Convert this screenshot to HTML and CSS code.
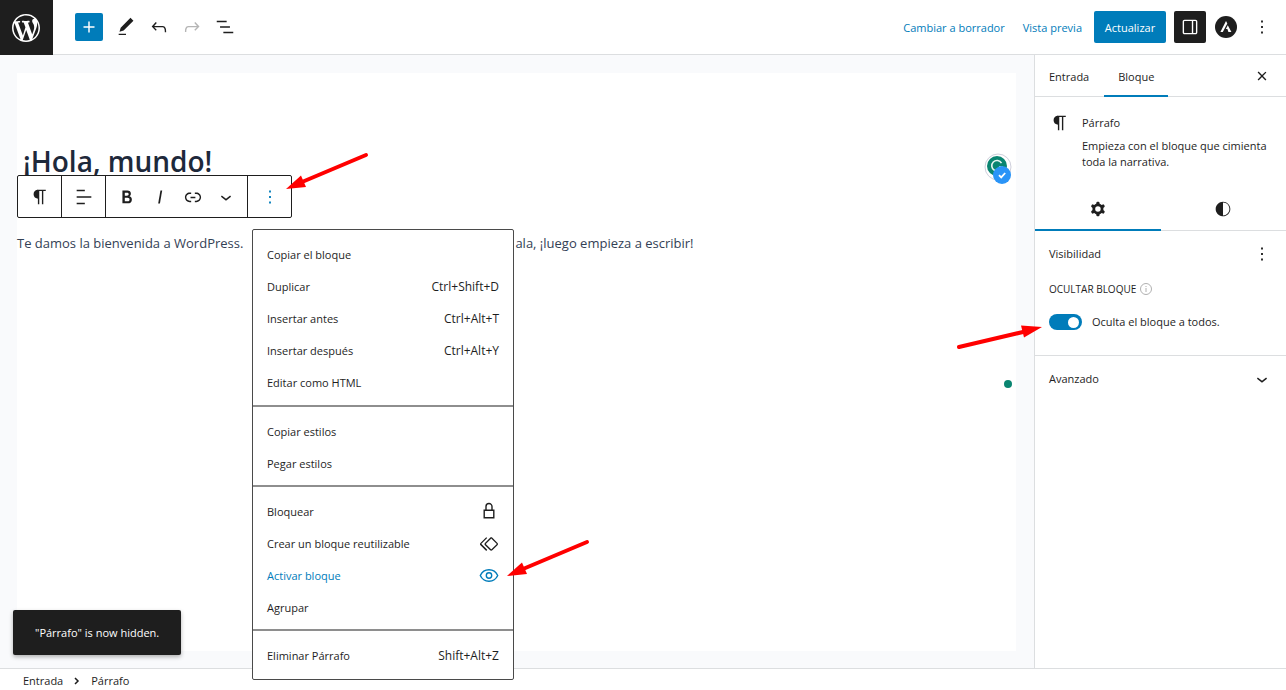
FILE: index.html
```html
<!DOCTYPE html>
<html lang="es">
<head>
<meta charset="utf-8">
<title>Editar entrada</title>
<link rel="stylesheet" href="styles.css">
</head>
<body>
<div class="editor">
  <header class="header">
    <a class="logo" href="#" aria-label="Ver entradas"><svg class="logo-mark" viewBox="0 0 20 20"><path d="M20 10c0-5.51-4.49-10-10-10C4.48 0 0 4.49 0 10c0 5.52 4.48 10 10 10 5.51 0 10-4.48 10-10zM7.78 15.37L4.37 6.22c.55-.02 1.17-.08 1.17-.08.5-.06.44-1.13-.06-1.11 0 0-1.45.11-2.37.11-.18 0-.37 0-.58-.01C4.12 2.69 6.87 1.11 10 1.11c2.33 0 4.45.87 6.05 2.34-.68-.11-1.65.39-1.65 1.58 0 .74.45 1.36.9 2.1.35.61.55 1.36.55 2.46 0 1.49-1.4 5-1.4 5l-3.03-8.37c.54-.02.82-.17.82-.17.5-.05.44-1.25-.06-1.22 0 0-1.44.12-2.38.12-.87 0-2.33-.12-2.33-.12-.5-.03-.56 1.2-.06 1.22l.92.08 1.26 3.41zM17.41 10c.24-.64.74-1.87.43-4.25.7 1.29 1.05 2.71 1.05 4.25 0 3.29-1.73 6.24-4.4 7.78.97-2.59 1.94-5.2 2.92-7.78zM6.1 18.09C3.12 16.65 1.11 13.53 1.11 10c0-1.3.23-2.48.72-3.59C3.25 10.3 4.67 14.2 6.1 18.09zm4.03-6.63l2.58 6.98c-.86.29-1.76.45-2.71.45-.79 0-1.57-.11-2.29-.33.81-2.38 1.62-4.74 2.42-7.1z"/></svg></a>
    <div class="tools">
      <button class="add" aria-label="Añadir bloque"><svg class="icon" viewBox="0 0 24 24"><path d="M18 11.2h-5.2V6h-1.6v5.2H6v1.6h5.2V18h1.6v-5.2H18z"/></svg></button>
      <button class="tool" aria-label="Herramientas"><svg class="icon" viewBox="0 0 24 24"><path d="M20.1 5.1L16.9 2 6.2 12.7l-1.3 4.4 4.5-1.3L20.1 5.1zM4 20.8h8v-1.5H4v1.5z"/></svg></button>
      <button class="tool" aria-label="Deshacer"><svg class="icon" viewBox="0 0 24 24"><path d="M18.3 11.7c-.6-.6-1.4-.9-2.3-.9H6.7l2.9-3.3-1.1-1-4.5 5L8.5 16l1-1-2.7-2.7H16c.5 0 .9.2 1.3.5 1 1 1 3.4 1 4.5v.3h1.5v-.2c0-1.5 0-4.3-1.5-5.7z"/></svg></button>
      <button class="tool tool-off" aria-label="Rehacer"><svg class="icon" viewBox="0 0 24 24"><path d="M15.6 6.5l-1.1 1 2.9 3.3H8c-.9 0-1.7.3-2.3.9-1.4 1.5-1.4 4.2-1.4 5.6v.2h1.5v-.3c0-1.1 0-3.5 1-4.5.3-.3.7-.5 1.3-.5h9.2L14.5 15l1.1 1.1 4.6-4.6-4.6-5z"/></svg></button>
      <button class="tool" aria-label="Vista de lista"><svg class="icon" viewBox="0 0 24 24"><path d="M13.8 5.2H3v1.5h10.8V5.2zm-3.6 12v1.5H21v-1.5H10.2zm7.2-6H6.6v1.5h10.8v-1.5z"/></svg></button>
    </div>
    <div class="actions">
      <button class="text-button">Cambiar a borrador</button>
      <a class="text-button" href="#">Vista previa</a>
      <button class="primary">Actualizar</button>
      <button class="panel-toggle" aria-label="Ajustes"><svg class="icon" viewBox="0 0 24 24"><path d="M18 4H6c-1.1 0-2 .9-2 2v12c0 1.1.9 2 2 2h12c1.1 0 2-.9 2-2V6c0-1.1-.9-2-2-2zm-4 14.5H6c-.3 0-.5-.2-.5-.5V6c0-.3.2-.5.5-.5h8v13zm4.5-.5c0 .3-.2.5-.5.5h-2.5v-13H18c.3 0 .5.2.5.5v12z"/></svg></button>
      <button class="plain" aria-label="Astra"><svg class="icon" viewBox="0 0 22 22"><circle cx="11" cy="11" r="11"/><path fill="#fff" d="M11 5 5.400 16h2.400l4.500-8.600zM12.800 9.200l-1.900 3.900h1.500l1 2.900h3z"/></svg></button>
      <button class="plain" aria-label="Opciones"><svg class="icon" viewBox="0 0 24 24"><path d="M13 19h-2v-2h2v2zm0-6h-2v-2h2v2zm0-6h-2V5h2v2z"/></svg></button>
    </div>
  </header>

  <div class="body">
    <main class="canvas">
      <article class="page">
        <h1 class="title">¡Hola, mundo!</h1>
        <p class="paragraph"><span>Te damos la bienvenida a WordPress.</span><span>ala, ¡luego empieza a escribir!</span></p>
      </article>

      <div class="block-toolbar">
        <div class="bt-group"><button class="bt" aria-label="Párrafo"><svg class="icon" viewBox="0 0 24 24"><path d="M18.300 4H9.900v-.1l-.9.200c-2.300.4-4 2.400-4 4.800s1.700 4.400 4 4.800l.7.100V20h1.500V5.500h2.900V20h1.500V5.500h2.700V4z"/></svg></button></div>
        <div class="bt-group"><button class="bt" aria-label="Alinear"><svg class="icon" viewBox="0 0 24 24"><path d="M4 19.800h8.900v-1.500H4v1.500zm8.900-15.600H4v1.500h8.900V4.200zm-8.900 7v1.500h16v-1.500H4z"/></svg></button></div>
        <div class="bt-group bt-format">
          <button class="bt" aria-label="Negrita"><svg class="icon" viewBox="0 0 24 24"><path d="M14.700 11.300c1-.6 1.500-1.600 1.500-3 0-2.300-1.300-3.400-4-3.400H7v14h5.800c1.400 0 2.500-.3 3.300-1 .8-.7 1.200-1.700 1.200-2.900.1-1.900-.8-3.100-2.600-3.700zm-5.100-4h2.300c.6 0 1.100.1 1.400.4.3.3.5.7.5 1.200s-.2 1-.5 1.200c-.3.3-.8.4-1.400.4H9.600V7.300zm4.600 9c-.4.3-1 .4-1.700.4H9.600v-3.900h2.900c.7 0 1.300.2 1.700.5.4.3.6.8.6 1.500s-.2 1.200-.6 1.500z"/></svg></button>
          <button class="bt" aria-label="Cursiva"><svg class="icon" viewBox="0 0 24 24"><path d="M12.500 5L10 19h1.900l2.500-14z"/></svg></button>
          <button class="bt" aria-label="Enlace"><svg class="icon" viewBox="0 0 24 24"><path d="M15.600 7.200H14v1.500h1.600c2 0 3.700 1.700 3.700 3.700s-1.700 3.700-3.700 3.700H14v1.500h1.600c2.800 0 5.200-2.300 5.200-5.200 0-2.900-2.300-5.200-5.200-5.200zM4.700 12.400c0-2 1.700-3.700 3.700-3.700H10V7.200H8.400c-2.900 0-5.200 2.300-5.200 5.200 0 2.900 2.300 5.200 5.200 5.200H10v-1.500H8.400c-2 0-3.700-1.700-3.700-3.700zm4.600.9h5.300v-1.500H9.300v1.500z"/></svg></button>
          <button class="bt" aria-label="Más"><svg class="icon" viewBox="0 0 24 24"><path d="M17.500 11.600L12 16l-5.500-4.400.9-1.200L12 14l4.500-3.600 1 1.200z"/></svg></button>
        </div>
        <div class="bt-group"><button class="bt bt-active" aria-label="Opciones"><svg class="icon" viewBox="0 0 24 24"><path d="M13 19h-2v-2h2v2zm0-6h-2v-2h2v2zm0-6h-2V5h2v2z"/></svg></button></div>
      </div>

      <div class="menu" role="menu">
        <div class="menu-group">
          <button class="item" role="menuitem">Copiar el bloque</button>
          <button class="item" role="menuitem">Duplicar<span class="shortcut">Ctrl+Shift+D</span></button>
          <button class="item" role="menuitem">Insertar antes<span class="shortcut">Ctrl+Alt+T</span></button>
          <button class="item" role="menuitem">Insertar después<span class="shortcut">Ctrl+Alt+Y</span></button>
          <button class="item" role="menuitem">Editar como HTML</button>
        </div>
        <div class="menu-group">
          <button class="item" role="menuitem">Copiar estilos</button>
          <button class="item" role="menuitem">Pegar estilos</button>
        </div>
        <div class="menu-group">
          <button class="item" role="menuitem">Bloquear<svg class="icon" viewBox="0 0 22 22"><path class="line" d="M6.200 9.200h9.600v7.500H6.200zM8 9.200V5.500a3 3 0 0 1 6 0v3.700"/></svg></button>
          <button class="item" role="menuitem">Crear un bloque reutilizable<svg class="icon" viewBox="0 0 24 24"><path d="M21.300 10.800l-5.600-5.600c-.7-.7-1.800-.7-2.500 0l-5.600 5.600c-.7.7-.7 1.800 0 2.500l5.600 5.600c.3.3.8.5 1.200.5s.9-.2 1.200-.5l5.600-5.600c.8-.7.8-1.900.1-2.500zm-1 1.400l-5.600 5.600c-.1.1-.3.1-.4 0l-5.600-5.600c-.1-.1-.1-.3 0-.4l5.600-5.600s.1-.1.200-.1.100 0 .2.100l5.600 5.600c.1.1.1.3 0 .4zm-16.600-.4L10 5.500l-1-1-6.300 6.300c-.7.7-.7 1.800 0 2.500L9 19.500l1.100-1.100-6.300-6.300c-.2 0-.2-.2-.1-.3z"/></svg></button>
          <button class="item item-active" role="menuitem">Activar bloque<svg class="icon" viewBox="0 0 22 22"><path class="line" d="M2.300 10.500C4 6.800 7.300 4.800 11 4.800s7 2 8.700 5.700C18 14.200 14.700 16.200 11 16.200s-7-2-8.700-5.700z"/><circle class="line" cx="11" cy="10.500" r="2.700"/></svg></button>
          <button class="item" role="menuitem">Agrupar</button>
        </div>
        <div class="menu-group">
          <button class="item" role="menuitem">Eliminar Párrafo<span class="shortcut">Shift+Alt+Z</span></button>
        </div>
      </div>

      <svg class="grammar" viewBox="0 0 30 34"><circle cx="14" cy="15" r="13" fill="#fff" stroke="#cfd0dc"/><circle cx="13" cy="14" r="10" fill="#0a8571"/><path d="M17.500 11.200A5.200 5.200 0 1 0 18 15h-3" fill="none" stroke="#e8f4f1" stroke-width="1.600"/><circle cx="18" cy="23" r="9" fill="#2a94f7"/><path d="M15 23.200l2.200 2.200 4-4.400" fill="none" stroke="#fff" stroke-width="1.800"/></svg>
      <span class="status-dot"></span>
      <div class="snackbar" role="status">"Párrafo" is now hidden.</div>

      <svg class="arrow arrow-toolbar" viewBox="0 0 84 40"><path class="shaft" d="M81 4L17 31"/><path class="head" d="M1 38l15-13.500 5 11.500z"/></svg>
      <svg class="arrow arrow-menu" viewBox="0 0 84 40"><path class="shaft" d="M81 4L17 31"/><path class="head" d="M1 38l15-13.500 5 11.500z"/></svg>
      <svg class="arrow arrow-toggle" viewBox="0 0 88 30"><path class="shaft" d="M4 25L68 10"/><path class="head" d="M87 5L66 3.500l3 12z"/></svg>
    </main>

    <aside class="sidebar">
      <div class="tabs">
        <button class="tab">Entrada</button>
        <button class="tab tab-active">Bloque</button>
        <button class="close" aria-label="Cerrar"><svg class="icon" viewBox="0 0 24 24"><path d="M12 13.060l3.712 3.713 1.061-1.060L13.061 12l3.712-3.712-1.060-1.060L12 10.938 8.288 7.227l-1.061 1.060L10.939 12l-3.712 3.712 1.060 1.061L12 13.061z"/></svg></button>
      </div>
      <div class="card">
        <svg class="icon" viewBox="0 0 24 24"><path d="M18.300 4H9.900v-.1l-.9.200c-2.300.4-4 2.400-4 4.800s1.700 4.400 4 4.800l.7.100V20h1.500V5.500h2.900V20h1.500V5.500h2.700V4z"/></svg>
        <div>
          <h2 class="card-title">Párrafo</h2>
          <p class="card-text">Empieza con el bloque que cimienta toda la narrativa.</p>
        </div>
      </div>
      <div class="icon-tabs">
        <button class="icon-tab icon-tab-active" aria-label="Ajustes"><svg class="icon" viewBox="0 0 24 24"><path fill-rule="evenodd" d="M10.289 4.836A1 1 0 0111.275 4h1.306a1 1 0 01.987.836l.244 1.466c.787.26 1.503.679 2.108 1.218l1.393-.522a1 1 0 011.216.437l.653 1.130a1 1 0 01-.23 1.273l-1.148.944a6.025 6.025 0 010 2.435l1.149.946a1 1 0 01.23 1.272l-.653 1.130a1 1 0 01-1.216.437l-1.394-.522c-.605.54-1.320.958-2.108 1.218l-.244 1.466a1 1 0 01-.987.836h-1.306a1 1 0 01-.986-.836l-.244-1.466a5.995 5.995 0 01-2.108-1.218l-1.394.522a1 1 0 01-1.217-.436l-.653-1.131a1 1 0 01.23-1.272l1.149-.946a6.026 6.026 0 010-2.435l-1.148-.944a1 1 0 01-.23-1.272l.653-1.131a1 1 0 011.217-.437l1.393.522a5.994 5.994 0 012.108-1.218l.244-1.466zM14.929 12a3 3 0 11-6 0 3 3 0 016 0z"/></svg></button>
        <button class="icon-tab" aria-label="Estilos"><svg class="icon" viewBox="0 0 24 24"><path d="M12 4c-4.400 0-8 3.600-8 8v.1c0 4.100 3.200 7.500 7.200 7.900h.8c4.400 0 8-3.600 8-8s-3.600-8-8-8zm0 15V5c3.900 0 7 3.100 7 7s-3.100 7-7 7z"/></svg></button>
      </div>
      <section class="panel">
        <div class="panel-head"><h2 class="panel-title">Visibilidad</h2><button class="plain" aria-label="Opciones de visibilidad"><svg class="icon" viewBox="0 0 24 24"><path d="M13 19h-2v-2h2v2zm0-6h-2v-2h2v2zm0-6h-2V5h2v2z"/></svg></button></div>
        <div class="label-row">OCULTAR BLOQUE<svg class="info" viewBox="0 0 12 12"><circle cx="6" cy="6" r="5.500"/><path d="M6 5v4M6 3v1"/></svg></div>
        <label class="toggle-row"><input class="toggle" type="checkbox" checked>Oculta el bloque a todos.</label>
      </section>
      <section class="panel-head"><h2 class="panel-title">Avanzado</h2><button class="plain" aria-label="Abrir avanzado"><svg class="icon" viewBox="0 0 24 24"><path d="M17.500 11.600L12 16l-5.500-4.400.9-1.200L12 14l4.500-3.600 1 1.200z"/></svg></button></section>
    </aside>
  </div>

  <footer class="footer">
    <a class="crumb" href="#">Entrada</a>
    <svg class="sep" viewBox="0 0 8 8"><path d="M2 1l3 3-3 3"/></svg>
    <span class="crumb">Párrafo</span>
  </footer>
</div>
</body>
</html>
```
FILE: styles.css
```css
* { box-sizing: border-box; }
body {
  margin: 0;
  font: 11px/16px "Open Sans", "Noto Sans", sans-serif;
  color: #1e1e1e;
  background: #fff;
}
button {
  font: inherit;
  color: inherit;
  background: none;
  border: 0;
  padding: 0;
  cursor: pointer;
}
a { color: inherit; text-decoration: none; }
h1, h2, p { margin: 0; }
.icon { width: 22px; height: 22px; fill: currentColor; display: block; flex: none; }
.line { fill: none; stroke: currentColor; stroke-width: 1.4; }

.editor { display: flex; flex-direction: column; min-height: 100vh; }

.header { display: flex; align-items: stretch; height: 55px; border-bottom: 1px solid #dcdee0; }
.logo { width: 53px; height: 55px; background: #1e1e1e; color: #fff; display: grid; place-items: center; padding-right: 1px; }
.logo-mark { width: 28px; height: 28px; fill: currentColor; }
.tools { display: flex; align-items: center; gap: 11px; padding-left: 22px; }
.add { width: 28px; height: 28px; background: #007cba; color: #fff; border-radius: 2px; display: grid; place-items: center; margin-right: 1px; }
.tool-off { color: #b5b5b5; }
.actions { display: flex; align-items: center; margin-left: auto; padding-right: 13px; }
.text-button { color: #007cba; margin-right: 18px; padding-top: 2px; }
.actions a.text-button { margin-right: 12px; }
.primary { background: #007cba; color: #fff; height: 32px; width: 72px; padding-top: 2px; border-radius: 2px; }
.panel-toggle { width: 32px; height: 32px; background: #1e1e1e; color: #fff; border-radius: 2px; display: grid; place-items: center; margin: 0 9px 0 8px; }
.actions .plain + .plain { margin-left: 14px; }

.body { display: flex; flex: 1; }
.canvas { flex: 1; position: relative; background: #f9fafc; padding: 18px 18px 17px 17px; display: flex; }
.page { flex: 1; background: #fff; padding-top: 68px; }
.title { font-size: 28px; line-height: 40px; font-weight: 600; color: #1e293b; padding-left: 6px; }
.paragraph { display: flex; gap: 272px; font-size: 13px; line-height: 24px; color: #334155; margin-top: 50px; white-space: nowrap; }

.block-toolbar { position: absolute; left: 17px; top: 120px; display: flex; height: 43px; background: #fff; border: 1px solid #1e1e1e; border-radius: 2px; }
.bt-group { display: flex; align-items: center; justify-content: center; width: 44px; }
.bt-group:first-child { width: 43px; }
.bt-group + .bt-group { border-left: 1px solid #1e1e1e; }
.bt-group.bt-format { width: 142px; gap: 11px; }
.bt-active { color: #007cba; }

.menu { position: absolute; left: 252px; top: 174px; width: 262px; background: #fff; border: 1px solid #4a4a4a; border-radius: 2px; z-index: 2; }
.menu-group { padding: 9px 14px 5px; }
.menu-group:first-child { padding-bottom: 6px; }
.menu-group:last-child { padding-bottom: 7px; }
.menu-group + .menu-group { border-top: 2px solid #8e8e8e; }
.item { display: flex; align-items: center; justify-content: space-between; width: 100%; height: 32px; text-align: left; }
.item .icon { margin-right: -1px; }
.item-active { color: #007cba; }
.shortcut { font-size: 12px; }

.grammar { position: absolute; right: 20px; top: 97px; width: 30px; height: 34px; }
.status-dot { position: absolute; right: 22px; top: 325px; width: 8px; height: 8px; border-radius: 50%; background: #0a8571; }
.snackbar { position: absolute; left: 13px; bottom: 13px; padding: 15px 22px 14px; background: #1e1e1e; color: #fff; border-radius: 2px; box-shadow: 0 2px 4px rgba(0, 0, 0, .3); }

.arrow { position: absolute; z-index: 3; pointer-events: none; }
.shaft { stroke: #f00; stroke-width: 4; stroke-linecap: round; fill: none; }
.head { fill: #f00; }
.arrow-toolbar { left: 285px; top: 96px; width: 84px; height: 40px; }
.arrow-menu { left: 506px; top: 483px; width: 84px; height: 40px; }
.arrow-toggle { right: -9px; top: 267px; width: 88px; height: 30px; }

.sidebar { width: 252px; border-left: 1px solid #dcdee0; background: #fff; }
.tabs { display: flex; height: 42px; border-bottom: 1px solid #dcdee0; }
.tab { height: 42px; padding: 2px 14px 0; }
.tab:first-child { padding-right: 15px; }
.tab-active { border-bottom: 2px solid #007cba; padding-top: 4px; }
.close { margin-left: auto; padding-right: 13px; }
.card { display: flex; gap: 11px; padding: 17px 14px 16px; }
.card > .icon { margin-top: -2px; }
.card-title { font-size: 11px; line-height: 18px; font-weight: 500; }
.card-text { margin-top: 6px; }
.icon-tabs { display: flex; }
.icon-tab { flex: 1; height: 45px; display: grid; place-items: center; border-bottom: 1px solid #dcdee0; padding-top: 2px; }
.icon-tab-active { border-bottom: 2px solid #007cba; }
.panel { border-bottom: 1px solid #dcdee0; padding-bottom: 25px; }
.panel-head { display: flex; align-items: center; justify-content: space-between; height: 46px; padding: 0 13px 0 14px; }
.panel-title { font-size: 11px; line-height: 16px; font-weight: 500; }
.label-row { display: flex; align-items: center; gap: 4px; padding: 4px 14px 0; font-size: 10px; line-height: 16px; }
.info { width: 12px; height: 12px; fill: none; stroke: #b0b0b0; }
.toggle-row { display: flex; align-items: center; gap: 10px; padding: 17px 14px 0; }
.toggle { appearance: none; width: 33px; height: 16px; margin: 0; border-radius: 8px; background: #007cba; display: flex; justify-content: flex-end; align-items: center; padding-right: 3px; }
.toggle::after { content: ""; width: 11px; height: 11px; border-radius: 50%; background: #fff; }

.footer { display: flex; align-items: center; height: 22px; border-top: 1px solid #dcdee0; padding: 2px 23px 0; gap: 10px; }
.sep { width: 8px; height: 8px; fill: none; stroke: #1e1e1e; stroke-width: 1.5; }
```
